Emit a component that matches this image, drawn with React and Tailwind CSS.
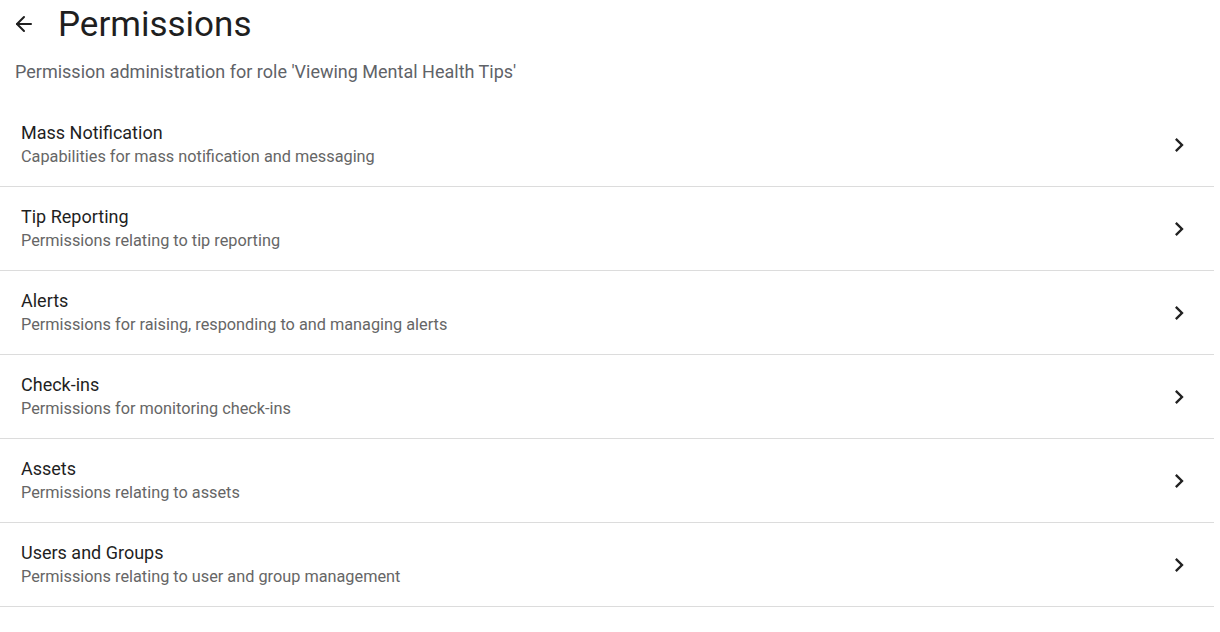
import { ArrowLeft } from 'lucide-react';

const sections = [
  { title: 'Mass Notification', desc: 'Capabilities for mass notification and messaging' },
  { title: 'Tip Reporting', desc: 'Permissions relating to tip reporting' },
  { title: 'Alerts', desc: 'Permissions for raising, responding to and managing alerts' },
  { title: 'Check-ins', desc: 'Permissions for monitoring check-ins' },
  { title: 'Assets', desc: 'Permissions relating to assets' },
  { title: 'Users and Groups', desc: 'Permissions relating to user and group management' },
];

const ChevronRight = () => (
  <svg width="28" height="28" viewBox="0 0 24 24" fill="currentColor">
    <path d="M10 6 8.59 7.41 13.17 12l-4.58 4.59L10 18l6-6z" />
  </svg>
);

export default function App() {
  return (
    <div className="w-[1214px] bg-white font-['Roboto',sans-serif] text-[rgba(0,0,0,0.87)]">
      <div className="flex items-center h-[48px] pl-[12px]">
        <ArrowLeft size={24} strokeWidth={2} className="text-[#1f1f1f]" />
        <h1 className="ml-[22px] text-[35px] leading-none text-[#1f1f1f]">Permissions</h1>
      </div>
      <p className="mt-[10px] pl-[15px] text-[18px] text-[#5f6368]">
        Permission administration for role 'Viewing Mental Health Tips'
      </p>
      <ul className="mt-[18px]">
        {sections.map((s) => (
          <li key={s.title} className="flex items-center h-[84px] pl-[21px] pr-[21px] border-b border-[#dcdcdc]">
            <div className="flex-1">
              <div className="text-[18px] leading-[22px] text-[#1f1f1f]">{s.title}</div>
              <div className="mt-[2px] text-[16.3px] leading-[22px] text-[#666]">{s.desc}</div>
            </div>
            <span className="text-[#222]"><ChevronRight /></span>
          </li>
        ))}
      </ul>
    </div>
  );
}
